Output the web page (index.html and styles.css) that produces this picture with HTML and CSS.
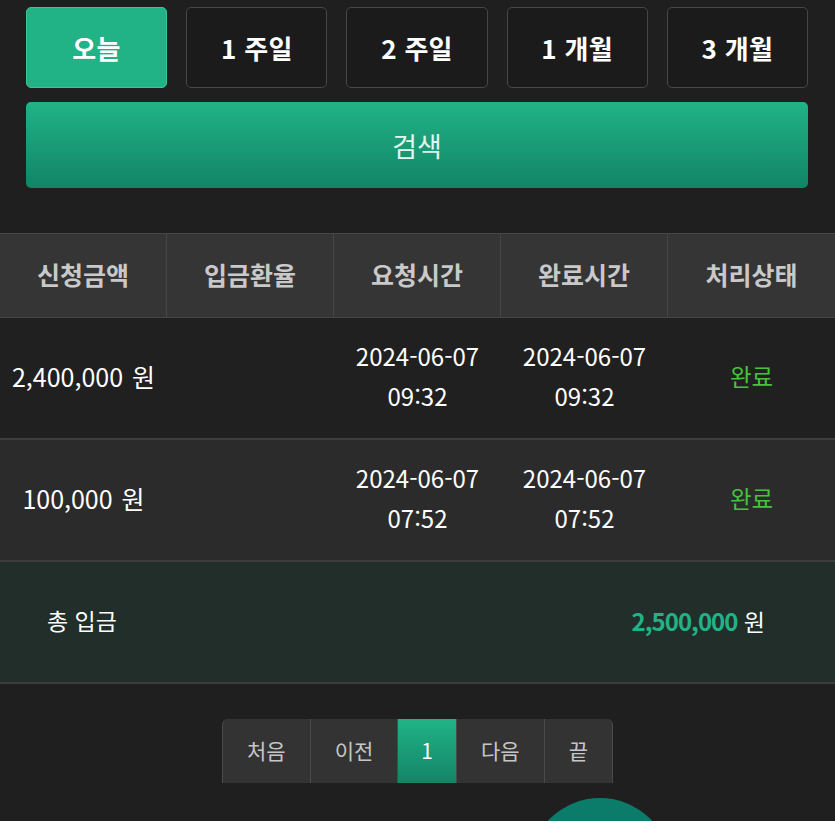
FILE: index.html
```html
<!DOCTYPE html>
<html lang="ko">
<head>
<meta charset="utf-8">
<link rel="stylesheet" href="styles.css">
</head>
<body>
<div class="page">
  <div class="filters">
    <div class="periods">
      <button class="period active">오늘</button>
      <button class="period">1 주일</button>
      <button class="period">2 주일</button>
      <button class="period">1 개월</button>
      <button class="period">3 개월</button>
    </div>
    <button class="search">검색</button>
  </div>

  <div class="table">
    <div class="thead">
      <div class="th">신청금액</div>
      <div class="th">입금환율</div>
      <div class="th">요청시간</div>
      <div class="th">완료시간</div>
      <div class="th">처리상태</div>
    </div>
    <div class="tr">
      <div class="td amount">2,400,000 원</div>
      <div class="td"></div>
      <div class="td">2024-06-07<br>09:32</div>
      <div class="td">2024-06-07<br>09:32</div>
      <div class="td status">완료</div>
    </div>
    <div class="tr alt">
      <div class="td amount">100,000 원</div>
      <div class="td"></div>
      <div class="td">2024-06-07<br>07:52</div>
      <div class="td">2024-06-07<br>07:52</div>
      <div class="td status">완료</div>
    </div>
    <div class="total">
      <span class="total-label">총 입금</span>
      <span class="total-value"><b>2,500,000</b> 원</span>
    </div>
  </div>

  <div class="pager">
    <span class="pg">처음</span>
    <span class="pg">이전</span>
    <span class="pg current">1</span>
    <span class="pg">다음</span>
    <span class="pg">끝</span>
  </div>
</div>
<div class="fab"></div>
</body>
</html>
```

FILE: styles.css
```css
html, body {
  margin: 0;
  padding: 0;
  background: #1f1f1f;
  font-family: "Noto Sans CJK KR", "Noto Sans", sans-serif;
  color: #ffffff;
  overflow: hidden;
}

.page {
  padding-top: 7px;
}

.filters {
  padding: 0 27px 0 26px;
}

.periods {
  display: grid;
  grid-template-columns: repeat(5, 1fr);
  gap: 19px;
}

.period {
  height: 81px;
  border: 1px solid #474747;
  background: #1b1b1b;
  border-radius: 5px;
  color: #ffffff;
  font-family: inherit;
  font-size: 26px;
  font-weight: 700;
  padding: 0;
  letter-spacing: 0.3px;
}

.period.active {
  background: #21b386;
  border-color: #3ac597;
}

.search {
  display: block;
  width: 100%;
  height: 86px;
  margin-top: 14px;
  border: none;
  border-radius: 5px;
  background: linear-gradient(to bottom, #21b386, #128466);
  color: #e3f5ee;
  font-family: inherit;
  font-size: 27px;
  font-weight: 400;
}

.table {
  margin-top: 45px;
  border-top: 1px solid #464646;
}

.thead {
  display: grid;
  grid-template-columns: repeat(5, 1fr);
  height: 83px;
  background: #353535;
  border-bottom: 1px solid #464646;
}

.th {
  display: flex;
  align-items: center;
  justify-content: center;
  border-right: 1px solid #464646;
  color: #c9c9c9;
  font-size: 25px;
  font-weight: 700;
  padding-bottom: 3px;
}

.th:last-child {
  border-right: none;
}

.tr {
  display: grid;
  grid-template-columns: repeat(5, 1fr);
  height: 120px;
  background: #202020;
  border-bottom: 2px solid #3d3d3d;
}

.tr.alt {
  background: #2b2b2b;
}

.td {
  display: flex;
  align-items: center;
  justify-content: center;
  text-align: center;
  font-size: 24px;
  line-height: 40px;
  color: #ffffff;
  padding-bottom: 4px;
}

.td.amount {
  font-size: 25px;
  word-spacing: 2px;
}

.td.status {
  color: #46c23c;
  font-size: 23.5px;
}

.total {
  display: flex;
  align-items: center;
  justify-content: space-between;
  height: 120px;
  padding: 0 70px 0 47px;
  background: #212e2a;
  border-bottom: 2px solid #3d3d3d;
  font-size: 23px;
  color: #ffffff;
}

.total-label,
.total-value {
  padding-bottom: 4px;
}

.total-value b {
  color: #21b386;
  font-size: 24px;
  font-weight: 700;
  letter-spacing: -1px;
}

.pager {
  display: flex;
  justify-content: center;
  margin-top: 35px;
}

.pager .pg {
  display: flex;
  align-items: center;
  justify-content: center;
  height: 64px;
  padding: 0 24px;
  background: #333333;
  border-left: 1px solid #4a4a4a;
  color: #c6c6c6;
  font-size: 21px;
  padding-bottom: 2px;
  box-sizing: border-box;
}

.pager .pg:first-child {
  border-top-left-radius: 6px;
}

.pager .pg:last-child {
  border-right: 1px solid #4a4a4a;
  border-top-right-radius: 6px;
}

.pager .pg.current {
  background: linear-gradient(to bottom, #21b386, #138567);
  color: #ffffff;
  padding: 0 23px 2px;
}

.fab {
  position: absolute;
  left: 529px;
  top: 798px;
  width: 142px;
  height: 142px;
  border-radius: 50%;
  background: #0b7b6a;
}
```
